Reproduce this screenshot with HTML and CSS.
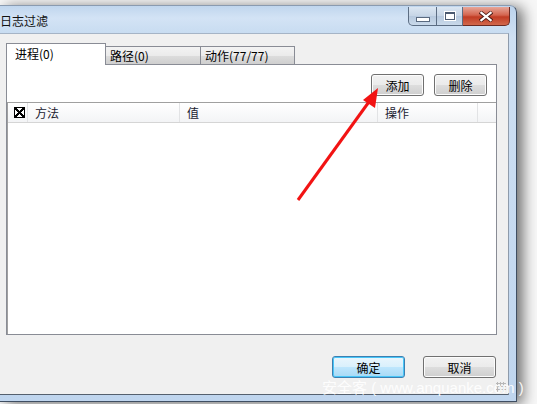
FILE: index.html
```html
<!DOCTYPE html>
<html lang="zh-CN">
<head>
    <meta charset="UTF-8">
    <title>日志过滤</title>
    <link rel="stylesheet" href="styles.css">
</head>
<body>
    <div class="window">
        <div class="titlebar">
            <span class="title">日志过滤</span>
            <div class="caption">
                <span class="cap cap-min"><i></i></span>
                <span class="cap cap-max"><i></i></span>
                <span class="cap cap-close">
                    <svg width="14" height="11" viewBox="0 0 14 11">
                        <path d="M1 1 L13 10 M13 1 L1 10" stroke="#4a1a14" stroke-width="4"/>
                        <path d="M1.5 1.2 L12.5 9.8 M12.5 1.2 L1.5 9.8" stroke="#fff" stroke-width="2.2"/>
                    </svg>
                </span>
            </div>
        </div>
        <div class="client">
            <div class="tabs">
                <div class="tabstrip">
                    <div class="tab active">进程(0)</div>
                    <div class="tab">路径(0)</div>
                    <div class="tab">动作(77/77)</div>
                </div>
                <div class="tabpage">
                    <div class="toolbar">
                        <button class="btn small">添加</button>
                        <button class="btn small">删除</button>
                    </div>
                    <div class="list">
                        <div class="list-head">
                            <div class="col col-check"><span class="chk"></span></div>
                            <div class="col col-method">方法</div>
                            <div class="col col-value">值</div>
                            <div class="col col-op">操作</div>
                            <div class="col col-rest"></div>
                        </div>
                    </div>
                </div>
            </div>
            <div class="footer">
                <button class="btn wide default">确定</button>
                <button class="btn wide">取消</button>
            </div>
            <span class="grip"></span>
        </div>
    </div>

    <!-- annotation arrow drawn over the dialog -->
    <svg class="arrow" width="537" height="404" viewBox="0 0 537 404">
        <line x1="298" y1="200" x2="371" y2="99" stroke="#f21313" stroke-width="3"/>
        <polygon points="378,88 363,100 375,108" fill="#f21313"/>
    </svg>
    <div class="watermark">安全客 ( www.anquanke.com )</div>
</body>
</html>
```

FILE: styles.css
```css
body {
    margin: 0;
    width: 537px;
    height: 404px;
    overflow: hidden;
    background: #f7f7f7;
    font-family: 'Liberation Sans', 'Noto Sans CJK SC', sans-serif;
    font-size: 12px;
    color: #000;
    position: relative;
}
.window {
    margin-top: 5px;
    width: 509px;
    height: 389px;
    padding: 0 7px 6px 0;
    background: linear-gradient(180deg, #bcd3ec 0%, #cfe0f3 8%, #bfd5ee 100%);
    border-top: 1px solid #8a9bb0;
    border-right: 1px solid #3f4e62;
    border-bottom: 1px solid #3f4e62;
    border-top-right-radius: 7px;
    box-shadow: 6px 2px 14px rgba(0, 0, 0, 0.55);
    display: flex;
    flex-direction: column;
}
.titlebar {
    height: 27px;
    display: flex;
    align-items: flex-start;
    justify-content: space-between;
    background: linear-gradient(180deg, #c0d6ee 0%, #d3e3f5 45%, #c8dcf1 100%);
    border-top-right-radius: 6px;
}
.title {
    margin-top: 6px;
    font-family: 'Noto Sans CJK SC', sans-serif;
    font-size: 12px;
    color: #111;
}
.caption {
    display: flex;
    margin-top: 1px;
    margin-right: -7px;
    padding-right: 6px;
}
.cap {
    height: 18px;
    border: 1px solid #5c6d83;
    border-top: none;
    display: flex;
    align-items: center;
    justify-content: center;
}
.cap-min, .cap-max {
    width: 27px;
    background: linear-gradient(180deg, #dbe6f2 0%, #c6d5e6 50%, #b7c9de 51%, #c9d9ea 100%);
}
.cap-min {
    border-bottom-left-radius: 5px;
}
.cap-min i {
    width: 12px;
    height: 3px;
    margin-top: 6px;
    background: #fff;
    border: 1px solid #5a6a80;
}
.cap-max {
    width: 25px;
    border-left: none;
}
.cap-max i {
    width: 8px;
    height: 5px;
    border: 1px solid #4b5a70;
    border-top-width: 2px;
    background: #fff;
    outline: 1px solid #fff;
}
.cap-close {
    width: 46px;
    border-left: none;
    border-bottom-right-radius: 5px;
    background: linear-gradient(180deg, #e7a698 0%, #d4654f 45%, #c13c24 55%, #d2684c 100%);
    border-color: #6b2a22;
}
.client {
    flex: 1;
    background: #f0f0f0;
    border-top: 1px solid #a5b4c6;
    border-right: 1px solid #8e9bab;
    border-bottom: 1px solid #55606e;
    display: flex;
    flex-direction: column;
    position: relative;
}
.tabs {
    margin: 9px 11px 0 6px;
    display: flex;
    flex-direction: column;
}
.tabstrip {
    display: flex;
    align-items: flex-end;
    height: 21px;
}
.tab {
    height: 17px;
    padding-left: 4px;
    line-height: 18px;
    border: 1px solid #898c95;
    border-bottom: none;
    background: linear-gradient(180deg, #f3f3f3 0%, #ebebeb 50%, #dddddd 51%, #cfcfcf 100%);
    font-family: 'Noto Sans CJK SC', sans-serif;
}
.tab + .tab {
    margin-left: -1px;
}
.tab:nth-child(2) {
    width: 90px;
}
.tab:nth-child(3) {
    width: 89px;
}
.tab.active {
    width: 90px;
    height: 21px;
    padding-left: 8px;
    line-height: 19px;
    background: #fff;
    margin-bottom: -1px;
    position: relative;
    z-index: 1;
}
.tabpage {
    height: 269px;
    background: #fff;
    border: 1px solid #898c95;
    display: flex;
    flex-direction: column;
}
.toolbar {
    display: flex;
    justify-content: flex-end;
    gap: 10px;
    padding: 9px 9px 0 0;
}
.btn {
    height: 22px;
    padding: 0;
    border: 1px solid #707070;
    border-radius: 3px;
    background: linear-gradient(180deg, #f2f2f2 0%, #ebebeb 50%, #dddddd 51%, #cfcfcf 100%);
    box-shadow: inset 0 0 0 1px #fcfcfc;
    font-family: 'Noto Sans CJK SC', sans-serif;
    font-size: 12px;
    color: #000;
}
.btn.small {
    width: 53px;
}
.btn.wide {
    width: 73px;
}
.btn.default {
    border-color: #3c7fb1;
    background: linear-gradient(180deg, #eaf6fd 0%, #d9f0fc 50%, #bee6fd 51%, #a7d9f5 100%);
    box-shadow: inset 0 0 0 1px #48c6f8;
}
.list {
    flex: 1;
    margin-top: 6px;
    border-top: 1px solid #a0a0a0;
    border-left: 1px solid #a0a0a0;
}
.list-head {
    display: flex;
    height: 19px;
    background: linear-gradient(180deg, #ffffff 0%, #f3f4f6 100%);
    border-bottom: 1px solid #d5d5d5;
}
.col {
    border-right: 1px solid #e2e3e5;
    padding-left: 7px;
    line-height: 20px;
    font-family: 'Noto Sans CJK SC', sans-serif;
    color: #1a2230;
}
.col-check {
    width: 13px;
    padding-left: 6px;
    display: flex;
    align-items: center;
}
.chk {
    width: 9px;
    height: 9px;
    border: 1px solid #000;
    background:
        linear-gradient(45deg, transparent 40%, #000 40%, #000 60%, transparent 60%),
        linear-gradient(-45deg, transparent 40%, #000 40%, #000 60%, transparent 60%),
        #fff;
}
.col-method {
    width: 144px;
}
.col-value {
    width: 190px;
}
.col-op {
    width: 92px;
}
.col-rest {
    flex: 1;
    border-right: none;
}
.footer {
    margin-top: auto;
    display: flex;
    justify-content: flex-end;
    gap: 18px;
    padding: 0 12px 16px 0;
}
.grip {
    position: absolute;
    right: 2px;
    bottom: 2px;
    width: 10px;
    height: 10px;
    background: radial-gradient(circle, #b8b8b8 1px, transparent 1.2px) 0 0 / 3px 3px;
}
.arrow {
    position: absolute;
    top: 0;
    left: 0;
    pointer-events: none;
}
.watermark {
    position: absolute;
    left: 322px;
    top: 376px;
    font-family: 'Liberation Sans', 'Noto Sans CJK SC', sans-serif;
    font-size: 15px;
    color: rgba(255, 255, 255, 0.92);
    white-space: nowrap;
}
```
